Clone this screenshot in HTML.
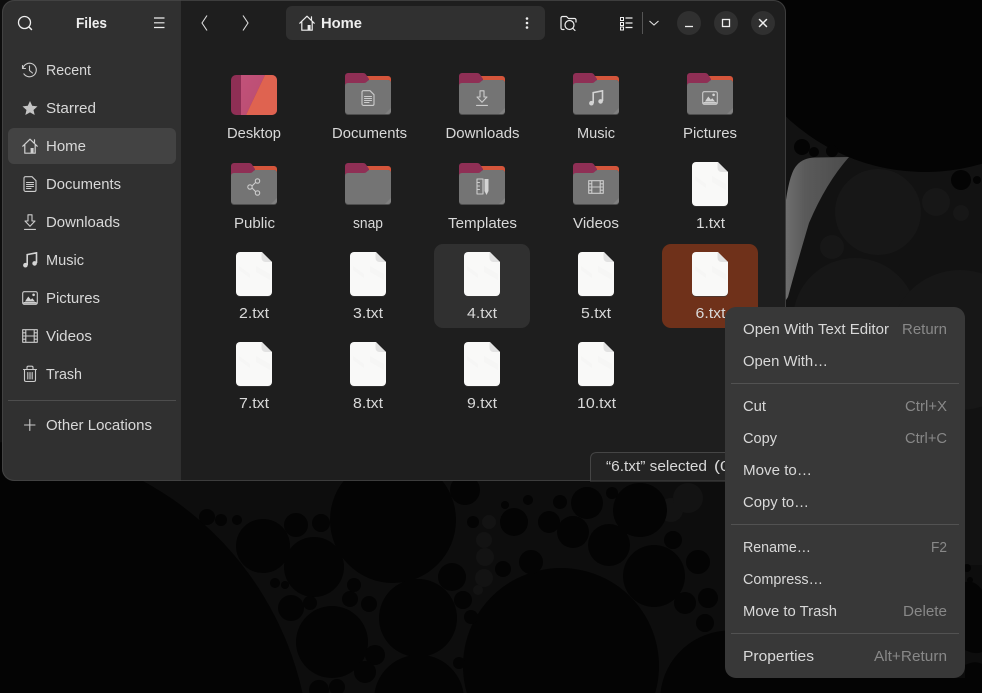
<!DOCTYPE html>
<html><head><meta charset="utf-8"><style>
html,body{margin:0;padding:0;background:#040404;width:982px;height:693px;overflow:hidden}
svg{display:block}
text{font-family:"Liberation Sans",sans-serif;font-size:14.5px;fill:#d8d8d8;white-space:pre}
.d{fill:#888888}
.b{font-weight:bold;fill:#eeeeee}
.i{fill:none;stroke:#cccccc;stroke-width:1.1;stroke-linecap:round;stroke-linejoin:round}
.w{fill:none;stroke:#eeeeee;stroke-width:1.2;stroke-linecap:round;stroke-linejoin:round}
</style></head><body>
<svg width="982" height="693" viewBox="0 0 982 693" xmlns="http://www.w3.org/2000/svg">
<defs>
<linearGradient id="hl" x1="0" x2="1" y1="0" y2="0"><stop offset="0" stop-color="#6e6e6e"/><stop offset=".3" stop-color="#5a5a5a"/><stop offset="1" stop-color="#4c4c4c"/></linearGradient>
<linearGradient id="dk" x1="0" x2="1" y1="0" y2="1"><stop offset="0" stop-color="#c2527a"/><stop offset="1" stop-color="#b94c70"/></linearGradient>
<symbol id="folder" viewBox="0 0 46 43" width="46" height="43">
<path d="M20 3H43a3 3 0 0 1 3 3V14H20z" fill="#d4553b"/>
<path d="M0 15V3a3 3 0 0 1 3-3H18q2 0 3 1.500L24 6V15z" fill="#8f2f55"/>
<path d="M0 14q0-3 3-3H19q2 0 3-1.500L24 7H43a3 3 0 0 1 3 3V39a3 3 0 0 1-3 3H3a3 3 0 0 1-3-3z" fill="#4e4e4e"/>
<path d="M0 13q0-3 3-3H19q2 0 3-1.500L24 7H43a3 3 0 0 1 3 3V38a3 3 0 0 1-3 3H3a3 3 0 0 1-3-3z" fill="#747474"/>
<path d="M46 35V38a3 3 0 0 1-3 3H40z" fill="#808080"/>
</symbol>
<symbol id="file" viewBox="0 0 36 45" width="36" height="45">
<path d="M4 1H26L36 11V41a4 4 0 0 1-4 4H4a4 4 0 0 1-4-4V5a4 4 0 0 1 4-4z" fill="#3a3a3a" opacity=".6"/>
<path d="M4 0H26L36 10V40a4 4 0 0 1-4 4H4a4 4 0 0 1-4-4V4a4 4 0 0 1 4-4z" fill="#f9f9f8"/>
<path d="M3 14L14 22V26L3 18zM20 14L34 22V28L20 20z" fill="#f6f6f5"/>
<path d="M25.500 0V6a4 4 0 0 0 4 4H36z" fill="#e2e2e2"/>
</symbol>
<symbol id="doc" viewBox="0 0 16 16" width="16" height="16"><path class="i" d="M3.500 .7H10L14 4.700V14a1.400 1.400 0 0 1-1.400 1.400H3.500A1.400 1.400 0 0 1 2 14V2.100A1.400 1.400 0 0 1 3.500 .7zM4.500 6.500H11.500M4.500 8.500H11.500M4.500 10.500H11.500M4.500 12.500H9"/></symbol>
<symbol id="dl" viewBox="0 0 16 16" width="16" height="16"><path class="i" d="M6 .8H10V7H13L8 12.300L3 7H6zM2.500 15.400H13.500"/></symbol>
<symbol id="music" viewBox="0 0 16 16" width="16" height="16"><path d="M5.200 13V2.600L14.500 .8V11" fill="none" stroke="#d4d4d4" stroke-width="1.600"/><circle cx="3.400" cy="13.200" r="2.300" fill="#d4d4d4"/><circle cx="12.600" cy="11.400" r="2.300" fill="#d4d4d4"/></symbol>
<symbol id="pic" viewBox="0 0 16 16" width="16" height="16"><rect x=".7" y="1.700" width="14.600" height="12.600" rx="1.600" class="i"/><path d="M3 11.500L6.300 6.500L8.800 9.600L10.300 8.200L13 11.500z" fill="#d4d4d4"/><circle cx="11.600" cy="4.800" r="1.300" fill="#d4d4d4"/><path d="M1.500 12.800H14.500" stroke="#d4d4d4" stroke-width="1.500"/></symbol>
<symbol id="vid" viewBox="0 0 16 16" width="16" height="16"><path class="i" d="M.7 1.700H15.300V14.300H.7zM3.800 1.700V14.300M12.200 1.700V14.300M3.800 8H12.200M.7 4.800H3.800M.7 8H3.800M.7 11.200H3.800M12.200 4.800H15.300M12.200 8H15.300M12.200 11.200H15.300"/></symbol>
<symbol id="home" viewBox="0 0 16 16" width="16" height="16"><path d="M.8 8.200L8 1.200L15.200 8.200M12.500 1.800V4.500M2.800 7V15.200H13.200V7" fill="none" stroke="currentColor" stroke-width="1.200" stroke-linejoin="round" stroke-linecap="round"/><rect x="8.600" y="10" width="3" height="5.200" fill="currentColor"/></symbol>
</defs>

<!-- wallpaper -->
<rect width="982" height="693" fill="#0d0d0d"/>
<rect x="786" y="100" width="196" height="465" fill="#121212"/>
<g fill="#171717">
<circle cx="878" cy="212" r="43"/><circle cx="936" cy="202" r="14"/><circle cx="855" cy="320" r="62"/><circle cx="960" cy="340" r="70"/>
<circle cx="832" cy="247" r="12"/><circle cx="815" cy="190" r="8"/><circle cx="961" cy="213" r="8"/>
</g>
<g fill="#131313">
<circle cx="484" cy="540" r="8"/><circle cx="489" cy="522" r="7"/><circle cx="485" cy="557" r="9"/><circle cx="484" cy="578" r="9"/><circle cx="478" cy="590" r="5"/>
<circle cx="671" cy="510" r="12"/><circle cx="688" cy="498" r="15"/>
</g>
<path d="M786 300V200Q790 172 797 165Q803 158 815 157.500L849 157Q826 183 809 223Q796 267 788 297z" fill="url(#hl)"/>
<g fill="#040404">
<path d="M725.200 0A202 202 0 0 0 982 163.800V0z"/>
<circle cx="961" cy="180" r="10"/><circle cx="802" cy="147" r="8"/><circle cx="814" cy="152" r="5"/><circle cx="832" cy="151" r="6"/><circle cx="977" cy="180" r="4"/>
<path d="M0 442.200A320 320 0 0 1 302.500 693H0z"/>
<circle cx="393" cy="520" r="63"/>
<path d="M466.800 693A98 98 0 1 1 655.200 693z"/>
<circle cx="418" cy="618" r="39"/><circle cx="332" cy="642" r="36"/><circle cx="263" cy="546" r="27"/><circle cx="314" cy="567" r="30"/><circle cx="654" cy="576" r="31"/><circle cx="640" cy="510" r="27"/><circle cx="609" cy="545" r="21"/><circle cx="573" cy="532" r="16"/><circle cx="514" cy="522" r="14"/><circle cx="549" cy="522" r="11"/><circle cx="587" cy="503" r="16"/><circle cx="531" cy="562" r="12"/><circle cx="452" cy="577" r="14"/><circle cx="463" cy="600" r="9"/><circle cx="471" cy="617" r="7"/><circle cx="685" cy="603" r="11"/><circle cx="698" cy="562" r="12"/><circle cx="708" cy="598" r="10"/><circle cx="705" cy="623" r="9"/><circle cx="673" cy="540" r="9"/><circle cx="296" cy="525" r="12"/><circle cx="321" cy="523" r="9"/><circle cx="207" cy="517" r="8"/><circle cx="221" cy="520" r="6"/><circle cx="237" cy="520" r="5"/><circle cx="291" cy="608" r="13"/><circle cx="310" cy="603" r="7"/><circle cx="350" cy="599" r="8"/><circle cx="369" cy="604" r="8"/><circle cx="354" cy="585" r="7"/><circle cx="275" cy="583" r="5"/><circle cx="285" cy="585" r="4"/><circle cx="465" cy="490" r="15"/><circle cx="375" cy="655" r="10"/><circle cx="365" cy="672" r="11"/>
<path d="M374.500 693A45 45 0 0 1 463.500 693z"/>
<circle cx="459" cy="663" r="6"/><circle cx="503" cy="569" r="8"/>
<path d="M309.500 693A10 10 0 1 1 328.500 693z"/>
<path d="M331.700 693A8 8 0 1 1 342.300 693z"/>
<path d="M660.400 693A70 70 0 0 1 799.600 693z"/>
<circle cx="560" cy="502" r="7"/><circle cx="612" cy="493" r="6"/><circle cx="528" cy="500" r="5"/><circle cx="473" cy="522" r="6"/><circle cx="505" cy="505" r="4"/>
<path d="M965 582Q975 580 982 590V652Q975 655 965 650z"/><circle cx="967" cy="568" r="4"/><circle cx="970" cy="580" r="3"/>
<path d="M790 678H982V664Q975 660 965 665V678zM790 678H982V693H790z"/>
</g>

<!-- window -->
<rect x="2" y="0" width="784" height="481" rx="12" fill="#1e1e1e"/>
<path d="M14 0H181V481H14A12 12 0 0 1 2 469V12A12 12 0 0 1 14 0z" fill="#303030"/>
<rect x="2.500" y=".5" width="783" height="480" rx="12" fill="none" stroke="#484848" stroke-opacity=".75"/>

<!-- sidebar header -->
<circle cx="24.500" cy="22.500" r="6" fill="none" stroke="#eee" stroke-width="1.300"/><path d="M29 27L31.500 29.500" stroke="#eee" stroke-width="1.500" stroke-linecap="round"/>
<text class="b" x="76" y="28" textLength="31" lengthAdjust="spacingAndGlyphs">Files</text>
<path d="M154 18H164.500M154 22.800H164.500M154 27.500H164.500" stroke="#eee" stroke-width="1.200"/>

<rect x="8" y="128" width="168" height="36" rx="6" fill="#434343"/>
<rect x="8" y="400" width="168" height="1" fill="#4d4d4d"/>

<g>
<circle cx="29.500" cy="70" r="6.800" class="i" stroke-dasharray="36 7" transform="rotate(200 29.500 70)"/><path class="i" d="M29.500 66V70.500L32.500 73M22.500 65.500V68.500H25.500"/>
<path d="M30 101L32.200 105.800L37.500 106.400L33.500 110L34.700 115L30 112.400L25.300 115L26.500 110L22.500 106.400L27.800 105.800z" fill="#c4c4c4"/>
<g color="#d0d0d0"><use href="#home" x="22" y="138"/></g>
<use href="#doc" x="22" y="176"/>
<use href="#dl" x="22" y="214"/>
<use href="#music" x="22" y="252"/>
<use href="#pic" x="22" y="290"/>
<use href="#vid" x="22" y="328"/>
<path class="i" d="M23.500 369.500H36.500M27 369.500V367.500Q27 366.200 28.300 366.200H31.700Q33 366.200 33 367.500V369.500M24.500 369.500V380Q24.500 381.500 26 381.500H34Q35.500 381.500 35.500 380V369.500M27.800 372.500V379M30 372.500V379M32.200 372.500V379"/>
<path class="i" d="M24.500 425H35M29.800 419.500V430.500"/>
</g>
<text x="46" y="75" textLength="45" lengthAdjust="spacingAndGlyphs">Recent</text>
<text x="46" y="113" textLength="50" lengthAdjust="spacingAndGlyphs">Starred</text>
<text x="46" y="151" textLength="40" lengthAdjust="spacingAndGlyphs">Home</text>
<text x="46" y="189" textLength="75" lengthAdjust="spacingAndGlyphs">Documents</text>
<text x="46" y="227" textLength="74" lengthAdjust="spacingAndGlyphs">Downloads</text>
<text x="46" y="265" textLength="38" lengthAdjust="spacingAndGlyphs">Music</text>
<text x="46" y="303" textLength="54" lengthAdjust="spacingAndGlyphs">Pictures</text>
<text x="46" y="341" textLength="46" lengthAdjust="spacingAndGlyphs">Videos</text>
<text x="46" y="379" textLength="36" lengthAdjust="spacingAndGlyphs">Trash</text>
<text x="46" y="430" textLength="106" lengthAdjust="spacingAndGlyphs">Other Locations</text>

<!-- header -->
<path d="M207 15.500L202 23L207 30.500M243 15.500L248 23L243 30.500" fill="none" stroke="#dcdcdc" stroke-width="1.100"/>
<rect x="286" y="6" width="259" height="34" rx="6" fill="#303030"/>
<g color="#eeeeee"><use href="#home" x="299" y="15"/></g>
<text class="b" x="321" y="28" textLength="41" lengthAdjust="spacingAndGlyphs">Home</text>
<circle cx="527" cy="18.500" r="1.300" fill="#eee"/><circle cx="527" cy="23" r="1.300" fill="#eee"/><circle cx="527" cy="27.500" r="1.300" fill="#eee"/>
<path class="w" d="M564 29.500H562.500A1.500 1.500 0 0 1 561 28V18A1.500 1.500 0 0 1 562.500 16.500H566.500L568.500 18.500H574.500A1.500 1.500 0 0 1 576 20V22"/>
<circle cx="569.500" cy="25" r="4.500" class="w"/><path class="w" d="M573 28.500L575 30.500"/>
<path d="M620.500 17.500h3v3h-3zM620.500 22.500h3v3h-3zM620.500 27h3v3h-3z" fill="none" stroke="#eee" stroke-width="1"/>
<path d="M625.500 18H632.500M625.500 23H632.500M625.500 27.500H632.500" stroke="#eee" stroke-width="1.200"/>
<rect x="642" y="12" width="1" height="22" fill="#555"/>
<path d="M649.500 21L654 25L658.500 21" fill="none" stroke="#e0e0e0" stroke-width="1.100"/>
<circle cx="689" cy="23" r="12" fill="#303030"/><circle cx="726" cy="23" r="12" fill="#303030"/><circle cx="763" cy="23" r="12" fill="#303030"/>
<path d="M685 26.500H693" stroke="#eee" stroke-width="1.300"/>
<rect x="722.500" y="19.500" width="7" height="7" fill="none" stroke="#eee" stroke-width="1.300"/>
<path d="M759.500 19.500L766.500 26.500M766.500 19.500L759.500 26.500" stroke="#eee" stroke-width="1.500" stroke-linecap="round"/>

<!-- selection -->
<rect x="434" y="244" width="96" height="84" rx="9" fill="#303030"/>
<rect x="662" y="244" width="96" height="84" rx="9" fill="#6f311a"/>

<!-- Row 1 -->
<rect x="231" y="75" width="46" height="40" rx="5" fill="#8f2f55"/>
<path d="M241 75H265L246 115H241z" fill="url(#dk)"/>
<path d="M265 75H272a5 5 0 0 1 5 5V110a5 5 0 0 1-5 5H246z" fill="#df6350"/>
<use href="#folder" x="345" y="73"/><use href="#doc" x="360" y="90"/>
<use href="#folder" x="459" y="73"/><use href="#dl" x="474" y="90"/>
<use href="#folder" x="573" y="73"/><use href="#music" x="588" y="90"/>
<use href="#folder" x="687" y="73"/><use href="#pic" x="702" y="90"/>
<text x="227" y="138" textLength="54" lengthAdjust="spacingAndGlyphs">Desktop</text>
<text x="332" y="138" textLength="75" lengthAdjust="spacingAndGlyphs">Documents</text>
<text x="445.500" y="138" textLength="74" lengthAdjust="spacingAndGlyphs">Downloads</text>
<text x="577" y="138" textLength="38" lengthAdjust="spacingAndGlyphs">Music</text>
<text x="683" y="138" textLength="54" lengthAdjust="spacingAndGlyphs">Pictures</text>

<!-- Row 2 -->
<use href="#folder" x="231" y="163"/>
<g class="i"><circle cx="257.500" cy="181" r="2.200"/><circle cx="250" cy="187" r="2.200"/><circle cx="257.500" cy="193" r="2.200"/><path d="M252 186L255.500 182.500M252 188L255.500 191.500"/></g>
<use href="#folder" x="345" y="163"/>
<use href="#folder" x="459" y="163"/>
<path class="i" d="M477 179H483V194H477zM477 182.500H479.500M477 186H479.500M477 189.500H479.500"/><path d="M484.500 179H488.500V191L486.500 195L484.500 191z" fill="#d4d4d4"/>
<use href="#folder" x="573" y="163"/><use href="#vid" x="588" y="179"/>
<use href="#file" x="692" y="162"/>
<text x="234" y="228" textLength="41" lengthAdjust="spacingAndGlyphs">Public</text>
<text x="353" y="228" textLength="30" lengthAdjust="spacingAndGlyphs">snap</text>
<text x="448" y="228" textLength="69" lengthAdjust="spacingAndGlyphs">Templates</text>
<text x="573" y="228" textLength="46" lengthAdjust="spacingAndGlyphs">Videos</text>
<text x="696" y="228" textLength="29" lengthAdjust="spacingAndGlyphs">1.txt</text>

<!-- Row 3 -->
<use href="#file" x="236" y="252"/><use href="#file" x="350" y="252"/><use href="#file" x="464" y="252"/><use href="#file" x="578" y="252"/><use href="#file" x="692" y="252"/>
<text x="239" y="318" textLength="30" lengthAdjust="spacingAndGlyphs">2.txt</text>
<text x="353" y="318" textLength="30" lengthAdjust="spacingAndGlyphs">3.txt</text>
<text x="467" y="318" textLength="30" lengthAdjust="spacingAndGlyphs">4.txt</text>
<text x="581" y="318" textLength="30" lengthAdjust="spacingAndGlyphs">5.txt</text>
<text x="695.500" y="318" textLength="30" lengthAdjust="spacingAndGlyphs">6.txt</text>

<!-- Row 4 -->
<use href="#file" x="236" y="342"/><use href="#file" x="350" y="342"/><use href="#file" x="464" y="342"/><use href="#file" x="578" y="342"/>
<text x="239" y="408" textLength="30" lengthAdjust="spacingAndGlyphs">7.txt</text>
<text x="353" y="408" textLength="30" lengthAdjust="spacingAndGlyphs">8.txt</text>
<text x="467" y="408" textLength="30" lengthAdjust="spacingAndGlyphs">9.txt</text>
<text x="577" y="408" textLength="39" lengthAdjust="spacingAndGlyphs">10.txt</text>

<!-- status -->
<path d="M590.500 481V459Q590.500 452.500 597 452.500H785V481z" fill="#242424" stroke="#454545"/>
<text x="606" y="471" textLength="101" lengthAdjust="spacingAndGlyphs">“6.txt” selected</text>
<text x="714" y="471" textLength="16" lengthAdjust="spacingAndGlyphs">(0</text>

<!-- context menu -->
<rect x="725" y="307" width="240" height="371" rx="11" fill="#383838"/>
<rect x="731" y="383" width="228" height="1" fill="#525252"/>
<rect x="731" y="524" width="228" height="1" fill="#525252"/>
<rect x="731" y="633" width="228" height="1" fill="#525252"/>
<text x="743" y="334" textLength="146" lengthAdjust="spacingAndGlyphs">Open With Text Editor</text>
<text x="743" y="366" textLength="85" lengthAdjust="spacingAndGlyphs">Open With…</text>
<text x="743" y="411" textLength="23" lengthAdjust="spacingAndGlyphs">Cut</text>
<text x="743" y="443" textLength="34" lengthAdjust="spacingAndGlyphs">Copy</text>
<text x="743" y="475" textLength="69" lengthAdjust="spacingAndGlyphs">Move to…</text>
<text x="743" y="507" textLength="66" lengthAdjust="spacingAndGlyphs">Copy to…</text>
<text x="743" y="552" textLength="68" lengthAdjust="spacingAndGlyphs">Rename…</text>
<text x="743" y="584" textLength="80" lengthAdjust="spacingAndGlyphs">Compress…</text>
<text x="743" y="616" textLength="94" lengthAdjust="spacingAndGlyphs">Move to Trash</text>
<text x="743" y="661" textLength="71" lengthAdjust="spacingAndGlyphs">Properties</text>
<text class="d" x="902" y="334" textLength="45" lengthAdjust="spacingAndGlyphs">Return</text>
<text class="d" x="905" y="411" textLength="42" lengthAdjust="spacingAndGlyphs">Ctrl+X</text>
<text class="d" x="905" y="443" textLength="42" lengthAdjust="spacingAndGlyphs">Ctrl+C</text>
<text class="d" x="931" y="552" textLength="16" lengthAdjust="spacingAndGlyphs">F2</text>
<text class="d" x="903" y="616" textLength="44" lengthAdjust="spacingAndGlyphs">Delete</text>
<text class="d" x="874" y="661" textLength="73" lengthAdjust="spacingAndGlyphs">Alt+Return</text>
</svg>
</body></html>
